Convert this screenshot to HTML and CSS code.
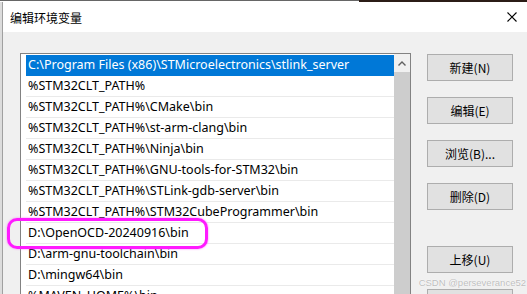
FILE: index.html
```html
<!DOCTYPE html>
<html>
<head>
  <title>编辑环境变量</title>
  <link rel="stylesheet" href="styles.css">
</head>
<body>
  <div class="top-strip">
      <div class="strip-light"></div>
      <div class="strip-dark"></div>
  </div>
  <div class="window">
      <div class="title-bar">
          <span class="title">编辑环境变量</span>
          <svg class="close" width="10" height="10" viewBox="0 0 10 10">
              <path d="M0.5 0.5 L9.5 9.5 M9.5 0.5 L0.5 9.5" stroke="#000" stroke-width="1.1" fill="none"></path>
          </svg>
      </div>
      <div class="content">
          <div class="list-box">
              <div class="rows">
                  <div class="row selected">C:\Program Files (x86)\STMicroelectronics\stlink_server</div>
                  <div class="row">%STM32CLT_PATH%</div>
                  <div class="row">%STM32CLT_PATH%\CMake\bin</div>
                  <div class="row">%STM32CLT_PATH%\st-arm-clang\bin</div>
                  <div class="row">%STM32CLT_PATH%\Ninja\bin</div>
                  <div class="row">%STM32CLT_PATH%\GNU-tools-for-STM32\bin</div>
                  <div class="row">%STM32CLT_PATH%\STLink-gdb-server\bin</div>
                  <div class="row">%STM32CLT_PATH%\STM32CubeProgrammer\bin</div>
                  <div class="row">D:\OpenOCD-20240916\bin</div>
                  <div class="row">D:\arm-gnu-toolchain\bin</div>
                  <div class="row">D:\mingw64\bin</div>
                  <div class="row">%MAVEN_HOME%\bin</div>
              </div>
              <div class="scrollbar">
                  <div class="arrow">
                      <svg width="8" height="5" viewBox="0 0 8 5">
                          <path d="M0.5 4.5 L4 1 L7.5 4.5" stroke="#606060" stroke-width="1.4" fill="none"></path>
                      </svg>
                  </div>
                  <div class="thumb"></div>
              </div>
          </div>
          <div class="buttons">
              <button class="btn">新建(N)</button>
              <button class="btn">编辑(E)</button>
              <button class="btn">浏览(B)...</button>
              <button class="btn">删除(D)</button>
              <button class="btn gap">上移(U)</button>
              <button class="btn">下移(O)</button>
          </div>
      </div>
  </div>
  <div class="highlight"></div>
  <div class="watermark">CSDN @perseverance52</div>
</body>
</html>
```

FILE: styles.css
```css
body {
    margin: 0;
    padding: 0;
    width: 527px;
    height: 294px;
    overflow: hidden;
    background: #dcdcdc;
    font-family: "Noto Sans", "Noto Sans CJK SC", sans-serif;
    font-size: 12.5px;
    color: #000;
    position: relative;
}
.top-strip {
    display: flex;
    height: 2px;
}
.strip-light {
    width: 359px;
    background: #fff;
    border-top: 1px solid #666;
}
.strip-dark {
    flex: 1;
    background: #2b1c16;
}
.window {
    margin-left: 2px;
    border-left: 1px solid #a0a0a0;
    height: 292px;
    overflow: hidden;
    background: #f0f0f0;
}
.title-bar {
    height: 30px;
    background: #fff;
    display: flex;
    align-items: center;
    justify-content: space-between;
    padding: 0 10px 0 7px;
}
.title {
    font-family: "Noto Sans CJK SC", sans-serif;
    font-size: 12px;
}
.content {
    display: flex;
    gap: 16px;
    padding: 21px 0 0 17px;
}
.list-box {
    display: flex;
    flex-shrink: 0;
    width: 384px;
    height: 260px;
    border: 1px solid #828282;
    background: #fff;
    padding-left: 5px;
}
.rows {
    flex: 1;
    padding-top: 1px;
    overflow: hidden;
}
.row {
    height: 20px;
    line-height: 20px;
    padding-left: 2px;
    border-bottom: 1px solid #eaeaea;
    white-space: nowrap;
    overflow: hidden;
}
.row.selected {
    background: #0078d7;
    color: #fff;
    border-bottom-color: #0078d7;
}
.scrollbar {
    width: 16px;
    display: flex;
    flex-direction: column;
    background: #f0f0f0;
}
.arrow {
    height: 18px;
    display: flex;
    align-items: center;
    justify-content: center;
}
.thumb {
    flex: 1;
    background: #cdcdcd;
}
.buttons {
    display: flex;
    flex-direction: column;
    gap: 16px;
    margin-top: 1px;
}
.btn {
    width: 86px;
    height: 27px;
    background: #e1e1e1;
    border: 1px solid #adadad;
    font-family: "Noto Sans CJK SC", sans-serif;
    font-size: 12px;
    color: #000;
    padding: 0;
}
.btn.gap {
    margin-top: 20px;
}
.highlight {
    position: absolute;
    left: 7px;
    top: 218px;
    width: 195px;
    height: 25px;
    border: 3px solid #ff1aff;
    border-radius: 10px;
    box-shadow: 0 0 2px #ff66ff;
}
.watermark {
    position: absolute;
    right: 1px;
    top: 277px;
    font-family: "Liberation Sans", sans-serif;
    font-size: 9.5px;
    color: #bdbdbd;
    text-shadow: 0 0 1px #fff, 0 0 1px #fff;
}
```
